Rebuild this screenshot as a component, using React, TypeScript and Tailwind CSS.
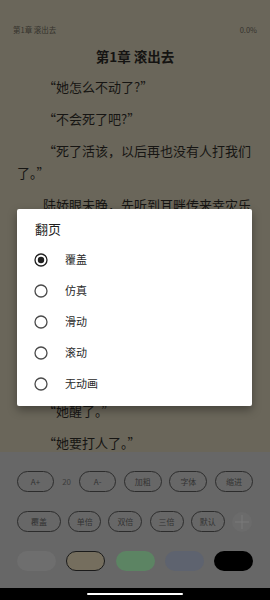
import React from "react";

const font = { fontFamily: '"Noto Sans CJK SC", "Noto Sans", sans-serif' };

function Pill({ w, children }: { w: string; children: React.ReactNode }) {
  return (
    <div
      className={`${w} h-[21px] rounded-full border border-[#2c2c2c] flex items-center justify-center text-[8px] leading-none text-[#333333]`}
    >
      {children}
    </div>
  );
}

function Radio({ checked }: { checked?: boolean }) {
  return (
    <svg width="14" height="14" viewBox="0 0 14 14" className="shrink-0">
      <circle cx="7" cy="7" r="6" fill="none" stroke={checked ? "#1f1f1f" : "#4a4a4a"} strokeWidth="1.3" />
      {checked && <circle cx="7" cy="7" r="3.2" fill="#1f1f1f" />}
    </svg>
  );
}

export default function App() {
  const options = ["覆盖", "仿真", "滑动", "滚动", "无动画"];
  const pc = "mt-[10px] text-[13px] leading-[22px] text-[#161513] indent-[2em]";
  return (
    <div className="relative w-[270px] h-[600px] flex flex-col bg-[#6a665a] overflow-hidden" style={font}>
      {/* reader */}
      <div className="flex-1 min-h-0 overflow-hidden px-[17px] pt-[24px]">
        <div className="h-[12px] flex items-center justify-between text-[7.5px] leading-none text-[#35332d] -mx-[4px]">
          <span>第1章 滚出去</span>
          <span>0.0%</span>
        </div>
        <div className="mt-[10px] h-[20px] leading-[20px] text-center text-[13.5px] font-bold text-[#151412]">
          第1章 滚出去
        </div>
        <p className={pc}>“她怎么不动了?”</p>
        <p className={pc}>“不会死了吧?”</p>
        <p className={pc}>“死了活该，以后再也没有人打我们了。”</p>
        <p className={pc}>
          陆娇眼未睁，先听到耳畔传来幸灾乐
          <span className="invisible">祸的声音，一个个都等着看她的笑话，巴不得她就这样一睡不醒。</span>
        </p>
        <p className={`${pc} invisible`}>“醒什么醒，她都晕过去三天了，大夫说怕是挺不过今晚。”</p>
        <p className={`${pc} invisible`}>
          陆娇只觉得浑身上下没有一处不疼，脑袋里更是像被人塞进了一团乱麻，无数陌生的记忆一股脑地涌了进来。
        </p>
        <p className={pc}>“她醒了。”</p>
        <p className={pc}>“她要打人了。”</p>
      </div>

      {/* bottom panel */}
      <div className="h-[136px] bg-[#676767] pt-[19px] flex flex-col">
        <div className="h-[21px] px-[17px] flex items-center justify-between">
          <Pill w="w-[37px]">A+</Pill>
          <span className="w-[10px] text-[8px] text-[#3d3d3d] text-center leading-none">20</span>
          <Pill w="w-[37px]">A-</Pill>
          <Pill w="w-[38px]">加粗</Pill>
          <Pill w="w-[38px]">字体</Pill>
          <Pill w="w-[38px]">缩进</Pill>
        </div>
        <div className="mt-[19px] h-[21px] pl-[17px] pr-[18px] flex items-center justify-between">
          <Pill w="w-[44px]">覆盖</Pill>
          <Pill w="w-[33px]">单倍</Pill>
          <Pill w="w-[34px]">双倍</Pill>
          <Pill w="w-[34px]">三倍</Pill>
          <Pill w="w-[34px]">默认</Pill>
          <div className="w-[20px] h-[20px] rounded-full bg-[#6b6b6b] flex items-center justify-center">
            <svg width="16" height="16" viewBox="0 0 16 16">
              <path d="M8 1v14M1 8h14" stroke="#7a7a7a" strokeWidth="1" />
            </svg>
          </div>
        </div>
        <div className="mt-[19px] h-[20px] px-[17px] flex items-center justify-between">
          <div className="w-[39px] h-[20px] rounded-full bg-[#6e6e6e]" />
          <div className="w-[39px] h-[20px] rounded-full bg-[#756e5e] border border-[#1b1b1b]" />
          <div className="w-[39px] h-[20px] rounded-full bg-[#5c8463]" />
          <div className="w-[39px] h-[20px] rounded-full bg-[#5e636f]" />
          <div className="w-[39px] h-[20px] rounded-full bg-black" />
        </div>
      </div>

      {/* system nav bar */}
      <div className="h-[12px] bg-black flex items-center justify-center">
        <div className="w-[96px] h-[2px] rounded-full bg-white" />
      </div>

      {/* dialog */}
      <div className="absolute left-[17px] top-[209px] w-[235px] bg-white rounded-[2px] shadow-[0_4px_10px_rgba(0,0,0,0.35)] pt-[11px] pb-[7px]">
        <div className="h-[18px] leading-[18px] pl-[18px] text-[13px] text-[#1e1e1e] mb-[6px]">翻页</div>
        {options.map((o, i) => (
          <div key={o} className="h-[31px] flex items-center pl-[17px] gap-[17px]">
            <Radio checked={i === 0} />
            <span className="text-[11px] text-[#2a2a2a] leading-none">{o}</span>
          </div>
        ))}
      </div>
    </div>
  );
}
